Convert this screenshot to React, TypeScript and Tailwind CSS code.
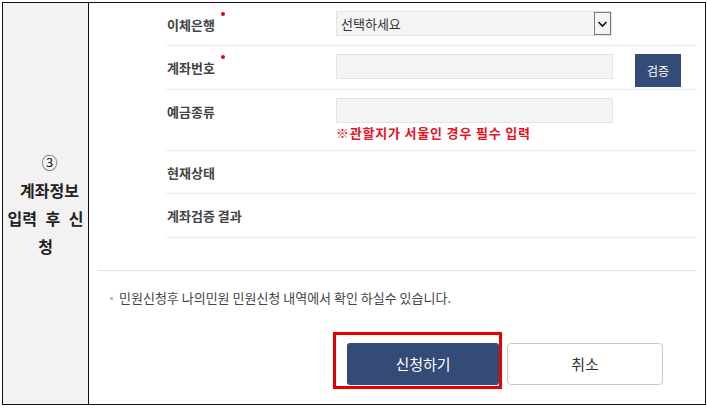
import React from 'react';

const font = { fontFamily: '"Noto Sans CJK KR", "Noto Sans", sans-serif' };

function RequiredDot() {
  return <span className="relative -top-[3px] ml-[6px] inline-block h-[4px] w-[4px] rounded-full bg-[#e60012] align-top" />;
}

function FormRow({
  label,
  required = false,
  height,
  children,
}: {
  label: string;
  required?: boolean;
  height: string;
  children?: React.ReactNode;
}) {
  return (
    <div className={`flex border-b border-[#ebebeb] pt-[8px] ${height}`}>
      <div className="w-[170px] pl-[1px] pt-[4px] text-[13px] font-bold leading-[20px] text-[#444]">
        {label}
        {required && <RequiredDot />}
      </div>
      <div className="flex-1">{children}</div>
    </div>
  );
}

export default function App() {
  return (
    <div className="h-[409px] w-[707px] bg-white pl-[2px] pt-[2px]" style={font}>
      <div className="flex h-[403px] w-[704px] border border-[#111]">
        {/* left step cell */}
        <div className="flex w-[86px] flex-col items-center justify-center border-r border-[#111] bg-[#f2f2f2] text-center text-[16px] font-bold leading-[28px] text-[#222]">
          <span className="pl-[8px] font-normal">③</span>
          <span className="pl-[8px]">계좌정보</span>
          <span className="whitespace-nowrap [word-spacing:5px]">입력 후 신</span>
          <span>청</span>
        </div>

        {/* right content cell */}
        <div className="flex-1 pl-[9px] pr-[8px]">
          <div className="pl-[68px]">
            <FormRow label="이체은행" required height="h-[43px]">
              <div className="flex h-[25px] w-[276px] items-center border border-[#e3e3e3] bg-[#f4f4f4]">
                <span className="flex-1 pl-[4px] text-[13px] text-[#333]">선택하세요</span>
                <span className="flex h-[23px] w-[17px] items-center justify-center border border-[#7a7a7a] bg-[#f4f4f4]">
                  <svg width="11" height="8" viewBox="0 0 11 8" fill="none">
                    <path d="M1.5 2 L5.5 6 L9.5 2" stroke="#111" strokeWidth="1.6" />
                  </svg>
                </span>
              </div>
            </FormRow>

            <FormRow label="계좌번호" required height="h-[44px]">
              <div className="flex items-start">
                <div className="h-[25px] w-[277px] border border-[#e3e3e3] bg-[#f4f4f4]" />
                <button className="ml-[22px] h-[33px] w-[46px] bg-[#344a77] text-[12px] text-white">검증</button>
              </div>
            </FormRow>

            <FormRow label="예금종류" height="h-[61px]">
              <div className="h-[25px] w-[277px] border border-[#e3e3e3] bg-[#f4f4f4]" />
              <p className="pt-[1px] text-[13px] font-bold leading-[18px] tracking-[0.8px] text-[#e8101f]">※관할지가 서울인 경우 필수 입력</p>
            </FormRow>

            <FormRow label="현재상태" height="h-[43px]" />
            <FormRow label="계좌검증 결과" height="h-[44px]" />
          </div>

          <div className="mt-[32px] border-t border-[#e3e3e3] pl-[12px] pt-[18px]">
            <p className="flex items-center text-[13px] leading-[18px] text-[#444]">
              <span className="mr-[6px] inline-block h-[3px] w-[3px] bg-[#bbb]" />
              민원신청후 나의민원 민원신청 내역에서 확인 하실수 있습니다.
            </p>
          </div>

          <div className="relative mt-[36px] flex gap-[8px] pl-[249px]">
            <button className="h-[42px] w-[152px] rounded-[3px] bg-[#344a77] text-[15px] text-white">신청하기</button>
            <button className="h-[42px] w-[156px] rounded-[4px] border border-[#c8c8c8] bg-white text-[15px] text-[#333]">취소</button>
            <div className="pointer-events-none absolute -top-[11px] left-[235px] h-[57px] w-[169px] border-[3px] border-[#e60000]" />
          </div>
        </div>
      </div>
    </div>
  );
}
